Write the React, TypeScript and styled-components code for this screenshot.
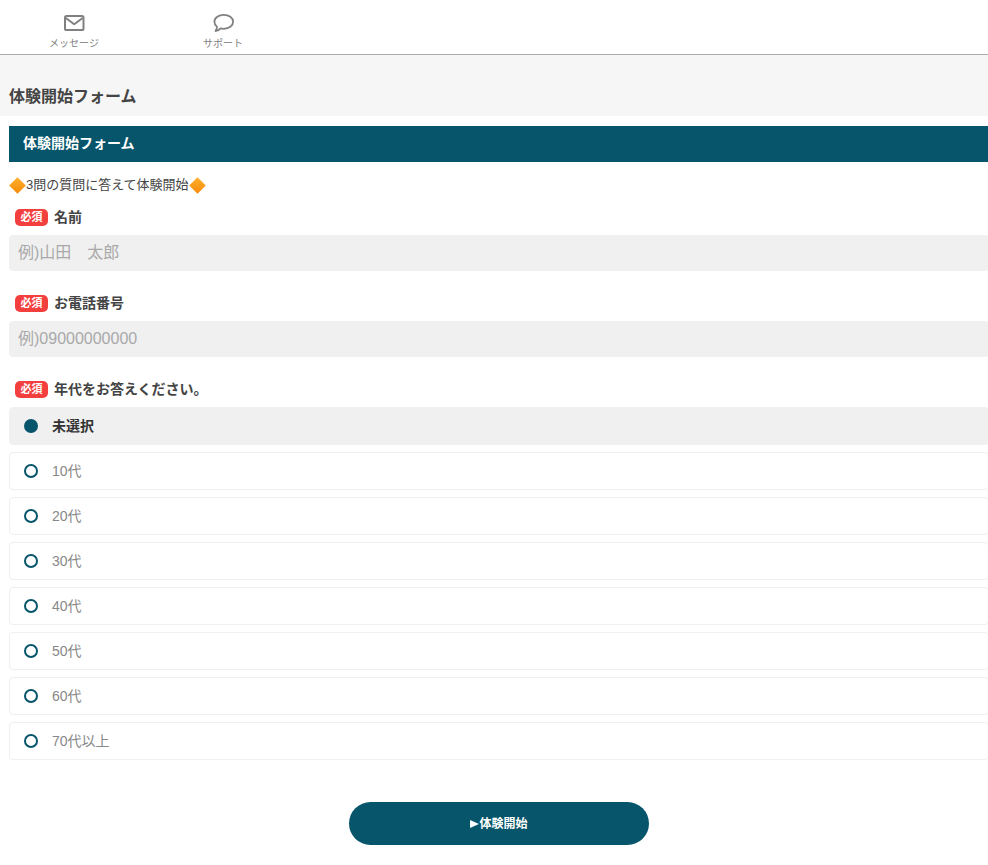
import styled, { createGlobalStyle } from "styled-components"

const ageOptions = ["未選択", "10代", "20代", "30代", "40代", "50代", "60代", "70代以上"]

const DiamondIcon = () => (
  <Diamond viewBox="0 0 17 17" aria-hidden="true">
    <defs>
      <linearGradient id="diamond-fill" x1="0" y1="0" x2="0" y2="1">
        <stop offset="0" stopColor="#ffb02e" />
        <stop offset="1" stopColor="#f58a07" />
      </linearGradient>
    </defs>
    <path d="M8.5 .2 16.8 8.5 8.5 16.8 .2 8.5Z" fill="url(#diamond-fill)" />
  </Diamond>
)

const Required = ({ children }: { children: string }) => (
  <FieldLabel>
    <RequiredTag>必須</RequiredTag>
    {children}
  </FieldLabel>
)

const App = () => {
  return (
    <Page>
      <GlobalStyle />
      <TabBar>
        <Tab>
          <TabIcon width="22" height="18" viewBox="0 0 22 18" fill="none" stroke="#808080" strokeWidth="2">
            <rect x="2" y="2" width="18.500" height="14" rx="1.600" />
            <path d="M2.800 4 11.200 10.200 19.600 4" strokeLinejoin="round" />
          </TabIcon>
          <TabLabel>メッセージ</TabLabel>
        </Tab>
        <Tab>
          <TabIcon width="22" height="18" viewBox="0 0 22 18" fill="none" stroke="#808080" strokeWidth="1.800">
            <path
              d="M11.800 .9C6.800 .9 2.400 3.700 2.400 7.800c0 2 .9 3.600 2.500 4.800.1 1.600-.5 3-1.400 4.400 2.100-.2 3.800-1.100 5.100-2.600 1 .2 2.200.4 3.200.4 5.100 0 9.300-2.900 9.300-7S16.900 .9 11.800 .9Z"
              strokeLinejoin="round"
            />
          </TabIcon>
          <TabLabel>サポート</TabLabel>
        </Tab>
      </TabBar>

      <TitleBand>
        <PageTitle>体験開始フォーム</PageTitle>
      </TitleBand>

      <Content>
        <PanelHeader>体験開始フォーム</PanelHeader>
        <Intro>
          <DiamondIcon />
          <IntroText>3問の質問に答えて体験開始</IntroText>
          <DiamondIcon />
        </Intro>

        <Field>
          <Required>名前</Required>
          <TextInput placeholder="例)山田　太郎" />
        </Field>
        <Field>
          <Required>お電話番号</Required>
          <TextInput placeholder="例)09000000000" />
        </Field>
        <Field>
          <Required>年代をお答えください。</Required>
          <OptionList>
            {ageOptions.map((label, index) => (
              <Option key={label} $selected={index === 0}>
                <Radio $selected={index === 0} />
                <OptionText>{label}</OptionText>
              </Option>
            ))}
          </OptionList>
        </Field>

        <SubmitRow>
          <SubmitButton type="button">
            <PlayMark viewBox="0 0 9 8" aria-hidden="true">
              <path d="M0 0 9 4 0 8Z" fill="#fff" />
            </PlayMark>
            <SubmitText>体験開始</SubmitText>
          </SubmitButton>
        </SubmitRow>
      </Content>
    </Page>
  )
}

const GlobalStyle = createGlobalStyle`
  html, body {
    margin: 0;
    padding: 0;
    background: #fff;
  }

  body {
    font-family: "Liberation Sans", "Noto Sans CJK JP", sans-serif;
    color: #444;
    overflow-x: hidden;
  }
`

const Page = styled.div`
  width: 988px;
  height: 865px;
  overflow: hidden;
`

const TabBar = styled.nav`
  display: flex;
  height: 54px;
  border-bottom: 1px solid #aaa;
  background: #fff;
`

const Tab = styled.div`
  width: 150px;
  margin-left: -1px;
  padding-top: 14px;
  display: flex;
  flex-direction: column;
  align-items: center;
  box-sizing: border-box;
`

const TabIcon = styled.svg`
  display: block;
`

const TabLabel = styled.span`
  margin-top: 5px;
  font-size: 10px;
  line-height: 14px;
  color: #808080;
`

const TitleBand = styled.div`
  height: 61px;
  padding: 0 9px;
  display: flex;
  align-items: flex-end;
  background: #f6f6f6;
`

const PageTitle = styled.h1`
  margin: 0 0 7px;
  font-size: 16px;
  line-height: 24px;
  font-weight: 700;
  color: #444;
`

const Content = styled.main`
  width: 980px;
  margin: 10px 0 0 9px;
`

const PanelHeader = styled.h2`
  margin: 0;
  height: 36px;
  padding-left: 14px;
  font-size: 14px;
  line-height: 35px;
  font-weight: 700;
  color: #fff;
  background: #07556b;
`

const Intro = styled.p`
  margin: 13px 0 0;
  display: flex;
  align-items: center;
  font-size: 13px;
  line-height: 19px;
  color: #444;
`

const IntroText = styled.span`
  padding-bottom: 2px;
`

const Diamond = styled.svg`
  width: 17px;
  height: 17px;
  flex: none;
`

const Field = styled.div`
  margin-top: 22px;

  &:first-of-type {
    margin-top: 11px;
  }
`

const FieldLabel = styled.div`
  height: 20px;
  padding-left: 6px;
  margin-bottom: 8px;
  display: flex;
  align-items: center;
  font-size: 14px;
  line-height: 20px;
  font-weight: 700;
  color: #444;
`

const RequiredTag = styled.span`
  width: 33px;
  height: 17px;
  margin-right: 6px;
  border-radius: 5px;
  font-size: 11px;
  line-height: 17px;
  font-weight: 700;
  text-align: center;
  color: #fff;
  background: #f43f3f;
`

const TextInput = styled.input`
  display: block;
  width: 100%;
  height: 36px;
  padding: 0 9px;
  box-sizing: border-box;
  border: 0;
  border-radius: 4px;
  outline: 0;
  font-family: inherit;
  font-size: 16px;
  background: #f0f0f0;

  &::placeholder {
    color: #a9a9a9;
    opacity: 1;
  }
`

const OptionList = styled.div`
  display: flex;
  flex-direction: column;
  gap: 7px;
`

const Option = styled.div<{ $selected: boolean }>`
  height: 38px;
  padding-left: 14px;
  box-sizing: border-box;
  display: flex;
  align-items: center;
  gap: 14px;
  border: 1px solid ${(p) => (p.$selected ? "#f0f0f0" : "#efefef")};
  border-radius: 4px;
  font-size: 14px;
  font-weight: ${(p) => (p.$selected ? 700 : 400)};
  color: ${(p) => (p.$selected ? "#333" : "#888")};
  background: ${(p) => (p.$selected ? "#f0f0f0" : "#fff")};
`

const OptionText = styled.span`
  padding-bottom: 2px;
`

const Radio = styled.span<{ $selected: boolean }>`
  width: 14px;
  height: 14px;
  box-sizing: border-box;
  border: 2px solid #07556b;
  border-radius: 50%;
  background: ${(p) => (p.$selected ? "#07556b" : "#fff")};
`

const SubmitRow = styled.div`
  margin-top: 42px;
  display: flex;
  justify-content: center;
`

const SubmitButton = styled.button`
  width: 300px;
  height: 43px;
  display: flex;
  align-items: center;
  justify-content: center;
  border: 0;
  border-radius: 22px;
  font-family: inherit;
  font-size: 12px;
  font-weight: 700;
  color: #fff;
  background: #07556b;
`

const SubmitText = styled.span`
  padding-bottom: 2px;
`

const PlayMark = styled.svg`
  width: 9px;
  height: 8px;
  flex: none;
`

export default App
